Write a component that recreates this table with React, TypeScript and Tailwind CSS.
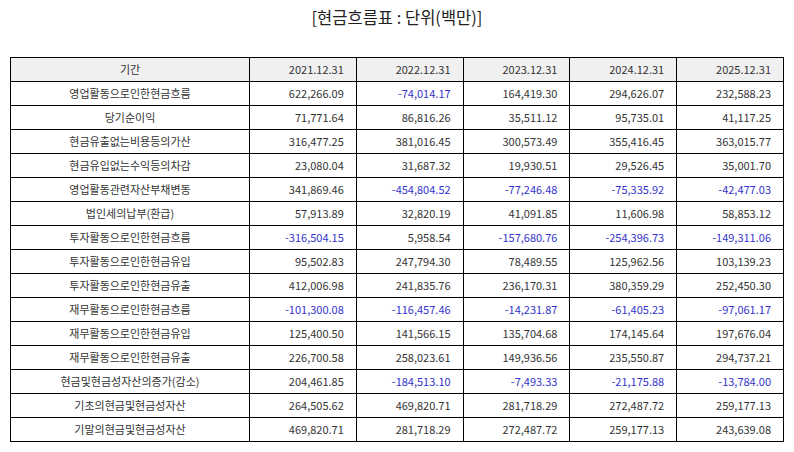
const years = ["2021.12.31", "2022.12.31", "2023.12.31", "2024.12.31", "2025.12.31"];

const rows: [string, string[]][] = [
  ["영업활동으로인한현금흐름", ["622,266.09", "-74,014.17", "164,419.30", "294,626.07", "232,588.23"]],
  ["당기순이익", ["71,771.64", "86,816.26", "35,511.12", "95,735.01", "41,117.25"]],
  ["현금유출없는비용등의가산", ["316,477.25", "381,016.45", "300,573.49", "355,416.45", "363,015.77"]],
  ["현금유입없는수익등의차감", ["23,080.04", "31,687.32", "19,930.51", "29,526.45", "35,001.70"]],
  ["영업활동관련자산부채변동", ["341,869.46", "-454,804.52", "-77,246.48", "-75,335.92", "-42,477.03"]],
  ["법인세의납부(환급)", ["57,913.89", "32,820.19", "41,091.85", "11,606.98", "58,853.12"]],
  ["투자활동으로인한현금흐름", ["-316,504.15", "5,958.54", "-157,680.76", "-254,396.73", "-149,311.06"]],
  ["투자활동으로인한현금유입", ["95,502.83", "247,794.30", "78,489.55", "125,962.56", "103,139.23"]],
  ["투자활동으로인한현금유출", ["412,006.98", "241,835.76", "236,170.31", "380,359.29", "252,450.30"]],
  ["재무활동으로인한현금흐름", ["-101,300.08", "-116,457.46", "-14,231.87", "-61,405.23", "-97,061.17"]],
  ["재무활동으로인한현금유입", ["125,400.50", "141,566.15", "135,704.68", "174,145.64", "197,676.04"]],
  ["재무활동으로인한현금유출", ["226,700.58", "258,023.61", "149,936.56", "235,550.87", "294,737.21"]],
  ["현금및현금성자산의증가(감소)", ["204,461.85", "-184,513.10", "-7,493.33", "-21,175.88", "-13,784.00"]],
  ["기초의현금및현금성자산", ["264,505.62", "469,820.71", "281,718.29", "272,487.72", "259,177.13"]],
  ["기말의현금및현금성자산", ["469,820.71", "281,718.29", "272,487.72", "259,177.13", "243,639.08"]],
];

export default function App() {
  return (
    <div className="w-[794px] h-[452px] bg-white px-[10px] pt-[5px] text-[#333] [font-family:'Noto_Sans_CJK_KR','Noto_Sans',sans-serif]">
      <h1 className="text-center text-[16.5px] leading-[24px] text-[#222]">[현금흐름표 : 단위(백만)]</h1>
      <table className="mt-[28px] w-[774px] border-collapse table-fixed text-[11px]">
        <colgroup>
          <col className="w-[239px]" />
          <col />
          <col />
          <col />
          <col />
          <col />
        </colgroup>
        <thead>
          <tr className="h-[24px] bg-[#f0f0f0]">
            <th className="border-[1.5px] border-black font-normal text-center">기간</th>
            {years.map((y) => (
              <th key={y} className="border-[1.5px] border-black font-normal text-right pr-[12px]">
                {y}
              </th>
            ))}
          </tr>
        </thead>
        <tbody>
          {rows.map(([label, vals]) => (
            <tr key={label} className="h-[24px]">
              <td className="border-[1.5px] border-black text-center">{label}</td>
              {vals.map((v, i) => (
                <td
                  key={i}
                  className={
                    v.startsWith("-")
                      ? "border-[1.5px] border-black text-right pr-[12px] text-[#3333cc]"
                      : "border-[1.5px] border-black text-right pr-[12px]"
                  }
                >
                  {v}
                </td>
              ))}
            </tr>
          ))}
        </tbody>
      </table>
    </div>
  );
}
